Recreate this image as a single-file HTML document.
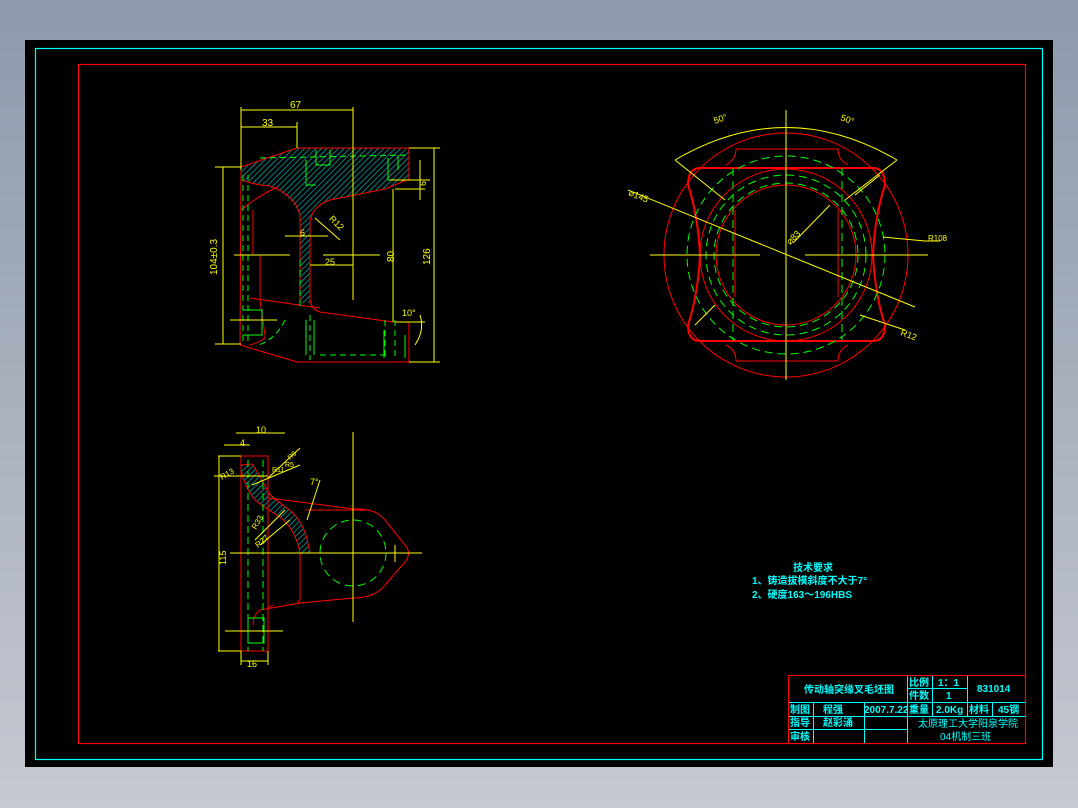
<!DOCTYPE html>
<html><head><meta charset="utf-8"><style>
html,body{margin:0;padding:0;width:1078px;height:808px;overflow:hidden;background:linear-gradient(#8d99ac,#c6c9d1);}
svg{position:absolute;left:0;top:0}
text{font-family:"Liberation Sans","Noto Sans CJK SC",sans-serif}
</style></head><body>
<svg width="1078" height="808" viewBox="0 0 1078 808">
<rect x="25" y="40" width="1028" height="727" fill="#000"/>
<rect x="35.5" y="48.5" width="1007" height="711" fill="none" stroke="#0ff" stroke-width="1.2"/>
<rect x="78.5" y="64.5" width="947" height="679" fill="none" stroke="#f00" stroke-width="1.2"/>

<!-- ===== side view ===== -->
<g stroke-width="1" fill="none">
<pattern id="h" width="4" height="4" patternUnits="userSpaceOnUse" patternTransform="rotate(45)"><line x1="0" y1="0" x2="0" y2="4" stroke="#0cc" stroke-width="1.2"/></pattern>
<path d="M241,167 L297,148 L409,148 L409,179 L385,189 L330,200 L315,208 L310,220 L310,303 L300,303 L300,215 L290,200 L275,188 L255,184 L241,180 Z" fill="url(#h)" stroke="none"/>
<g stroke="#f00">
<path d="M241,167 L297,148 L409,148 L409,179 L385,189 L330,200 Q312,206 310,222 L310,300 Q312,310 320,312 L393,322 L409,322 L409,362 L297,362 L240,345 L241,167"/>
<path d="M241,180 Q255,185 270,186 Q295,195 300,215 L300,303"/>
<path d="M250,298 L320,308"/>
<path d="M241,210 Q255,198 277,187"/>
<path d="M253,210 L253,255 M260,255 L260,300 L265,335 Q267,340 250,345"/>
</g>
<g stroke="#0f0" stroke-dasharray="6,4">
<path d="M243,175 L243,345 M248,175 L248,345 M300,260 L300,310 M310,315 L310,360"/>
<path d="M260,158 L410,155"/>
<path d="M385,320 L385,358 M395,320 L395,358 M320,355 L390,355"/>
<path d="M285,320 Q275,340 258,345"/>
</g>
<g stroke="#0f0">
<path d="M243,310 L262,310 L262,335 L243,335 M306,160 L306,185 L316,185 M316,150 L316,165 L330,165 L330,150 M388,158 L388,180 L402,180 M398,155 L398,170 M306,320 L306,355 M314,320 L314,355 M384,330 L384,358 M405,335 L405,358"/>
</g>
<g stroke="#ff0">
<path d="M241,107 L241,170 M297,122 L297,148 M353,107 L353,300 M241,110 L353,110 M241,127 L297,127"/>
<path d="M223,167 L223,344 M215,167 L241,167 M215,344 L241,344"/>
<path d="M434,148 L434,362 M409,148 L440,148 M409,362 L440,362"/>
<path d="M393,189 L393,322 M420,160 L420,200 M390,180 L430,180 M395,189 L425,189"/>
<path d="M234,255 L290,255 M323,255 L380,255 M285,236 L328,236 M310,265 L353,265"/>
<path d="M230,320 L277,320 M315,218 L340,240"/>
<path d="M395,322 L425,322 M420,315 Q425,330 415,345"/>
</g>
<g fill="#ff0" font-size="10">
<text x="290" y="108">67</text><text x="262" y="126">33</text>
<text x="300" y="236" font-size="9">6</text><text x="325" y="265" font-size="9">25</text>
<text x="330" y="224" font-size="9" transform="rotate(45 335 220)">R12</text>
<text x="0" y="0" transform="translate(394,262) rotate(-90)" font-size="10">80</text>
<text x="0" y="0" transform="translate(430,265) rotate(-90)" font-size="10">126</text>
<text x="0" y="0" transform="translate(217,275) rotate(-90)" font-size="10">104±0.3</text>
<text x="0" y="0" transform="translate(426,186) rotate(-90)" font-size="9">6</text>
<text x="402" y="316" font-size="9">10°</text>
</g>
</g>

<!-- ===== bottom-left view ===== -->
<g stroke-width="1" fill="none">
<path d="M241,465 L252,464 Q262,478 268,492 Q275,500 287,508 Q305,520 310,553 L300,553 Q296,530 280,517 Q265,508 255,500 Q245,488 241,470 Z" fill="url(#h)" stroke="#f00"/>
<g stroke="#f00">
<rect x="241" y="456" width="27" height="195"/>
<path d="M268,498 L300,502 L353,509 Q375,508 385,520 L405,545 Q412,553 405,562 L385,585 Q375,598 353,598 L300,603 Q296,603 300,600 L300,553"/>
<path d="M305,510 L370,510"/>
<path d="M300,603 L260,610 Q253,615 253,625 M268,608 L273,605"/>
</g>
<g stroke="#0f0">
<circle cx="353" cy="553" r="33" stroke-dasharray="8,5"/>
<path d="M248,460 L248,651 M263,460 L263,651" stroke-dasharray="7,4"/>
<rect x="248" y="618" width="16" height="25"/>
</g>
<g stroke="#ff0">
<path d="M353,432 L353,622 M230,553 L422,553 M395,545 L395,562"/>
<path d="M236,433 L285,433 M224,445 L250,445 M218,456 L241,456 M218,651 L241,651 M219,456 L219,651"/>
<path d="M214,476 L268,476 M225,631 L283,631"/>
<path d="M241,651 L241,665 M268,651 L268,665 M241,661 L268,661"/>
<path d="M268,478 L300,448 M252,485 L300,465 M255,540 L285,510 M260,545 L290,520 M320,480 L307,520"/>
</g>
<g fill="#ff0" font-size="9">
<text x="256" y="433">10</text><text x="240" y="446">4</text><text x="247" y="667">16</text>
<text x="0" y="0" transform="translate(226,565) rotate(-90)">115</text>
<text x="222" y="480" transform="rotate(-30 222 480)" font-size="8">R13</text>
<text x="272" y="472" font-size="7">R11</text><text x="285" y="467" font-size="7">R5</text>
<text x="290" y="460" font-size="7" transform="rotate(-40 290 460)">R9</text>
<text x="256" y="530" font-size="8" transform="rotate(-60 256 530)">R33</text>
<text x="258" y="548" font-size="8" transform="rotate(-40 258 548)">R27</text>
<text x="310" y="485" font-size="9">7°</text>
</g>
</g>

<!-- ===== circle view ===== -->
<g stroke-width="1" fill="none">
<g stroke="#f00">
<circle cx="786" cy="255" r="122"/>
<circle cx="786" cy="255" r="86"/>
<circle cx="786" cy="255" r="70"/>
<path d="M736,149 L838,149 Q838,160 848,165 M736,149 Q736,160 726,165 M736,361 L838,361 Q838,350 848,345 M736,361 Q736,350 726,345"/>
<path d="M735,210 L735,297 M838,210 L838,297"/>
<path stroke-width="2" d="M700,168 L873,168 Q885,168 885,185 Q875,215 873,255 Q875,295 885,325 Q885,341 873,341 L700,341 Q688,341 688,325 Q698,295 700,255 Q698,215 688,185 Q688,168 700,168 Z"/>
</g>
<g stroke="#0f0" stroke-dasharray="8,5">
<circle cx="786" cy="255" r="99"/>
<circle cx="786" cy="255" r="72"/>
<circle cx="786" cy="255" r="80"/>
<path d="M733,168 L733,340 M842,168 L842,340"/>
</g>
<g stroke="#ff0">
<path d="M786,110 L786,380 M650,255 L760,255 M805,255 L928,255"/>
<path d="M675,160 Q786,95 897,160 M675,160 L725,200 M897,160 L845,200"/>
<path d="M628,190 L915,307"/>
<path d="M793,243 L830,205"/>
<path d="M883,237 L925,241 L940,241 M860,315 L905,330"/>
<path d="M695,325 L715,305 M855,195 L880,175"/>
</g>
<g fill="#ff0" font-size="9">
<text x="715" y="124" transform="rotate(-20 715 124)">50°</text>
<text x="840" y="120" transform="rotate(20 840 120)">50°</text>
<text x="628" y="195" transform="rotate(22 628 195)">⌀145</text>
<text x="790" y="245" transform="rotate(-45 790 245)">⌀83</text>
<text x="928" y="241" font-size="8">R108</text>
<text x="900" y="335" transform="rotate(20 900 335)">R12</text>
</g>
</g>

<!-- tech requirements -->
<g fill="#0ff" font-size="10" font-weight="bold">
<text x="793" y="571">技术要求</text>
<text x="752" y="584">1、铸造拔模斜度不大于7°</text>
<text x="752" y="598">2、硬度163～196HBS</text>
</g>

<!-- title block -->
<g stroke="#0ff" stroke-width="1" fill="none">
<path d="M788.5,702.5 H1025 M788.5,716.5 H1025 M788.5,729.5 H907 M907,688.5 H967"/>
<path d="M813.5,702 V743 M864.5,702 V743 M907.5,675 V743 M932.5,675 V716 M967.5,675 V716 M992.5,702 V716"/>
</g>
<path d="M788.5,675.5 H1025.5 V743.5 H788.5 Z" fill="none" stroke="#f00"/>
<g fill="#0ff" font-size="10" font-weight="bold">
<text x="804" y="693">传动轴突缘叉毛坯图</text>
<text x="909" y="686">比例</text><text x="938" y="686">1：1</text>
<text x="909" y="699">件数</text><text x="946" y="699">1</text>
<text x="977" y="692">831014</text>
<text x="790" y="713">制图</text><text x="823" y="713">程强</text>
<text x="864" y="713" font-size="10">2007.7.22</text><text x="909" y="713">重量</text>
<text x="936" y="713">2.0Kg</text><text x="969" y="713">材料</text><text x="998" y="713">45钢</text>
<text x="790" y="726">指导</text><text x="823" y="726">赵彩涌</text>
<text x="790" y="740">审核</text>
<text x="918" y="727" font-weight="normal">太原理工大学阳泉学院</text>
<text x="940" y="740" font-weight="normal">04机制三班</text>
</g>
</svg>
</body></html>
